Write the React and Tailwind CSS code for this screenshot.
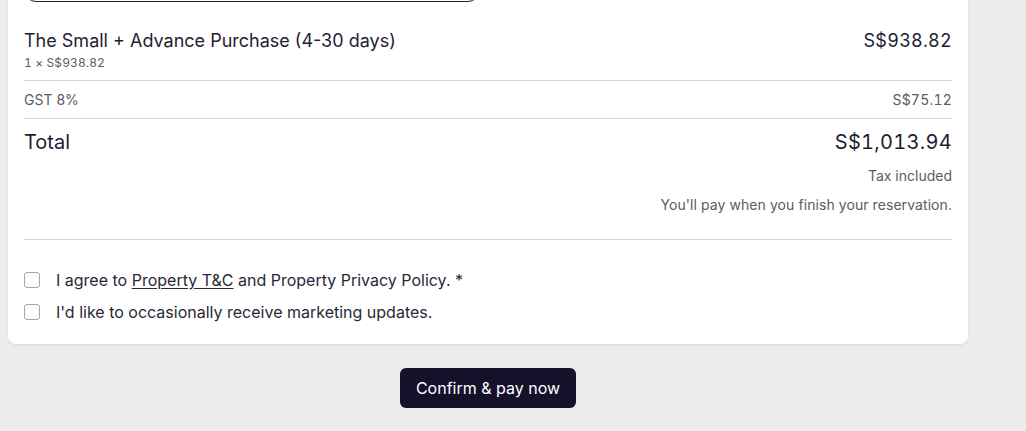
export default function App() {
  return (
    <div className="h-[431px] w-[1026px] overflow-hidden bg-[#ececee]" style={{ fontFamily: "Inter, 'Noto Sans', sans-serif" }}>
      <div className="ml-2 w-[960px]">
        <div className="-mt-[50px] rounded-lg bg-white px-4 pb-5 shadow-[0_1px_3px_rgba(0,0,0,0.08)]">
          <div className="h-[52px] w-[456px] rounded-xl border border-[#1c1a33]" />
          <div className="mt-[25px] flex items-start justify-between">
            <div>
              <div className="text-[18px] leading-7 text-[#1f1d33]">The Small + Advance Purchase (4-30 days)</div>
              <div className="text-[12px] leading-4 tabular-nums tracking-[0.01em] text-[#5b5b63]">1 × S$938.82</div>
            </div>
            <div className="text-[18px] leading-7 tabular-nums tracking-[0.015em] text-[#1f1d33]">S$938.82</div>
          </div>
          <div className="mt-[9px] border-t border-[#d6d6da]" />
          <div className="flex justify-between pt-[9px] pb-2 text-[14px] leading-5 text-[#5b5b63]">
            <span>GST 8%</span>
            <span className="tabular-nums tracking-[0.015em]">S$75.12</span>
          </div>
          <div className="border-t border-[#d6d6da]" />
          <div className="flex justify-between pt-[9px] text-[20px] leading-7 text-[#1f1d33]">
            <span>Total</span>
            <span className="tabular-nums tracking-[0.015em]">S$1,013.94</span>
          </div>
          <div className="mt-[10px] text-right text-[14px] leading-5 text-[#5b5b63]">Tax included</div>
          <div className="mt-[9px] text-right text-[14px] leading-5 tracking-[0.005em] text-[#5b5b63]">You'll pay when you finish your reservation.</div>
          <div className="mt-6 border-t border-[#d6d6da]" />
          <div className="mt-7 flex flex-col gap-2 text-[16px] leading-6 text-[#2a2838]">
            <label className="flex items-center gap-4">
              <span className="h-4 w-4 rounded-[3px] border border-[#a3a3aa] bg-white" />
              <span>I agree to <span className="underline underline-offset-2">Property T&amp;C</span> and Property Privacy Policy. *</span>
            </label>
            <label className="flex items-center gap-4">
              <span className="h-4 w-4 rounded-[3px] border border-[#a3a3aa] bg-white" />
              <span>I'd like to occasionally receive marketing updates.</span>
            </label>
          </div>
        </div>
        <div className="mt-6 flex justify-center">
          <button className="h-10 rounded-md bg-[#15112b] px-4 text-[16px] text-white">Confirm &amp; pay now</button>
        </div>
      </div>
    </div>
  );
}
